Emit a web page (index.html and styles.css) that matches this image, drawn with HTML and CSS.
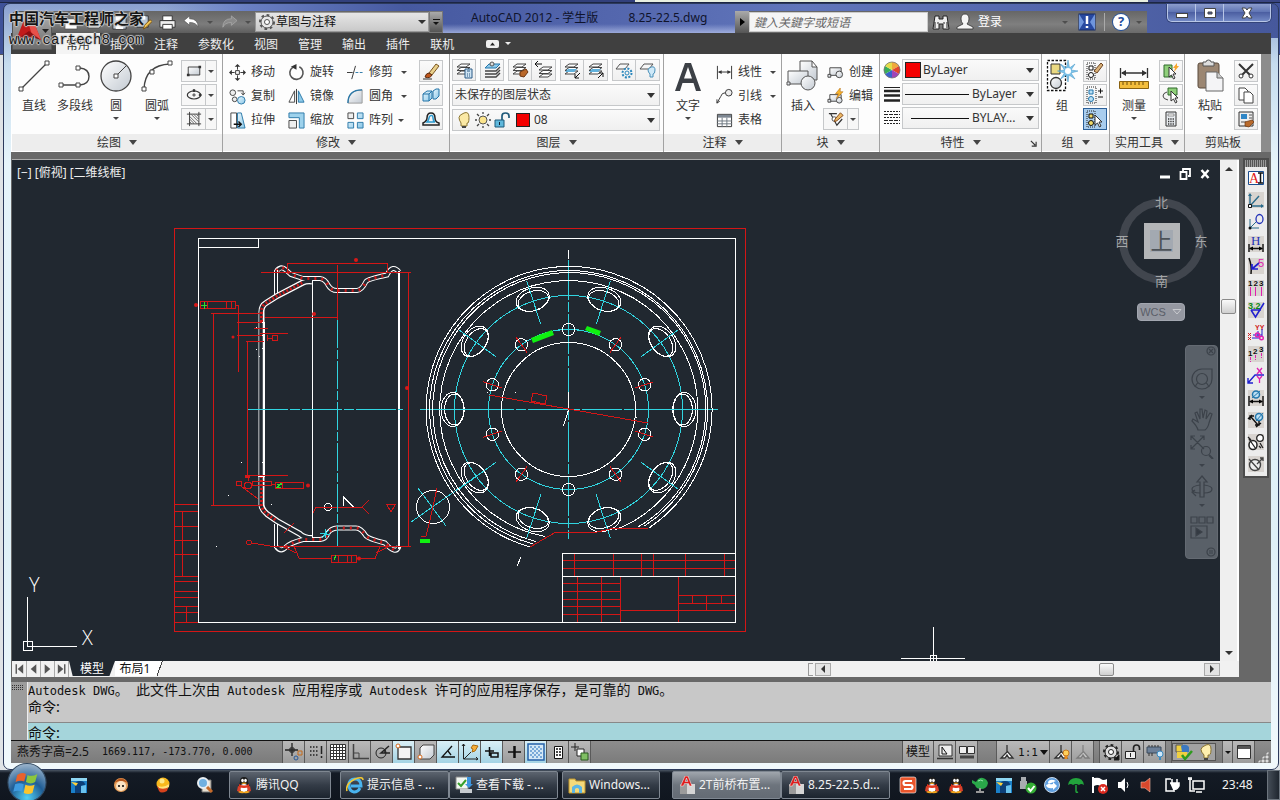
FILE: index.html
```html
<!DOCTYPE html>
<html lang="zh-CN">
<head>
<meta charset="utf-8">
<title>AutoCAD 2012 - 8.25-22.5.dwg</title>
<link rel="stylesheet" href="styles.css">
</head>
<body>
<svg class="defs" aria-hidden="true">
  <defs>
    <linearGradient id="gGrey" x1="0" y1="0" x2="1" y2="1"><stop offset="0" stop-color="#fff"/><stop offset="1" stop-color="#c3cad2"/></linearGradient>
    <linearGradient id="gBlue" x1="0" y1="0" x2="1" y2="1"><stop offset="0" stop-color="#e8f6fd"/><stop offset="1" stop-color="#8cc8e8"/></linearGradient>
    <radialGradient id="gOrb" cx=".5" cy=".9" r=".9"><stop offset="0" stop-color="#4fd0f5"/><stop offset=".5" stop-color="#1f5d95"/><stop offset="1" stop-color="#9fb6cc"/></radialGradient>
    <symbol id="layers" viewBox="0 0 18 18"><path d="M6 3h9l-4 3H2zM6 6.500h9l-4 3H2zM6 10h9l-4 3H2z" fill="#fff" stroke="#444"/></symbol>
    <symbol id="qq" viewBox="0 0 18 18"><path d="M3 11q2-3 2-6 0-4 4-4t4 4q0 3 2 6l-1 1-1 3H5l-1-3z" fill="#1c1c1c"/><ellipse cx="9" cy="12" rx="4" ry="4" fill="#fff"/><path d="M4 8q5 3 10 0v2.500q-5 3-10 0z" fill="#e2351d"/><path d="M3 10l3 1-1 5-3-1zM15 10l-3 1 1 5 3-1z" fill="#d8402a"/><ellipse cx="7.500" cy="4.500" rx="1.300" ry="1.800" fill="#fff"/><ellipse cx="10.500" cy="4.500" rx="1.300" ry="1.800" fill="#fff"/><path d="M6 7q3-1 6 0-3 2-6 0zM3 16q3-2 6 0 3-2 6 0-3 2-6 1-3 1-6-1z" fill="#f4a51c"/></symbol>
    <symbol id="bird" viewBox="0 0 18 18"><rect x="1" y="2" width="16" height="15" fill="#1a7fc8"/><path d="M1 2h16v3H1z" fill="#8ed6f2"/><path d="M5 17V9q0-4 5-4t5 4l-4 1v7z" fill="#0d3f78"/><path d="M1 6l7 1-2 3z" fill="#ffd33c"/><path d="M11 10l5-1v8h-5z" fill="#69c2ee"/></symbol>
    <symbol id="acad" viewBox="0 0 18 18"><rect x="2" y="8" width="15" height="10" fill="#9b9b9b"/><rect x="9" y="8" width="8" height="10" fill="#d5d5d5"/><path d="M2.500 10L7 0h3l4 10h-2.500l-1-2.500h-4L5.500 10zM7.200 5.500h2.600L8.500 2z" fill="#e01c1c" stroke="#fff" stroke-width=".5"/></symbol>
    <symbol id="man" viewBox="0 0 18 18"><path d="M9 2v7M9 9l-6 6h4l2-3 2 3h4L9 8z" fill="#fff" stroke="#333" stroke-width="1.300"/></symbol>
  </defs>
</svg>

<div class="desktop-strip"></div>

<main class="window">
  <header class="titlebar">
    <div class="qat">
      <button aria-label="新建"><svg class="i" viewBox="0 0 18 18"><path d="M2 5h9l4 3v8H2z" fill="#fff" stroke="#555"/></svg></button>
      <button aria-label="打开"><svg class="i" viewBox="0 0 18 18"><path d="M1 15V5h6l1 2h6v2h3l-4 6z" fill="#ddd" stroke="#444"/></svg></button>
      <button aria-label="保存"><svg class="i" viewBox="0 0 18 18"><path d="M2 2h14v14H2z" fill="#b9c6d4" stroke="#333"/><path d="M5 2h8v5H5zM5 10h8v6H5z" fill="#fff"/></svg></button>
      <button aria-label="另存为"><svg class="i" viewBox="0 0 18 18"><path d="M2 2h12v12H2z" fill="#b9c6d4" stroke="#333"/><path d="M5 2h6v4H5z" fill="#fff"/><path d="M9 16l1-4 6-6 2 2-6 6z" fill="#f1c453" stroke="#7a5210"/></svg></button>
      <button aria-label="打印"><svg class="i" viewBox="0 0 18 18"><path d="M4 2h10v5H4z" fill="#fff" stroke="#333"/><path d="M1 7h16v7H1z" fill="#eee" stroke="#333"/><path d="M4 11h10v5H4z" fill="#fff" stroke="#333"/></svg></button>
      <button aria-label="放弃"><svg class="i" viewBox="0 0 18 18"><path d="M1 7l6-5v3q9 0 9 9-2-5-9-5v3z" fill="#fff" stroke="#555" stroke-width=".7"/></svg></button>
      <span class="caret dim"></span>
      <button aria-label="重做"><svg class="i" viewBox="0 0 18 18"><path d="M17 7l-6-5v3q-9 0-9 9 2-5 9-5v3z" fill="#8b8b8b" stroke="#aaa" stroke-width=".8"/></svg></button>
      <span class="caret dim"></span>
      <div class="workspace-pick">
        <svg class="i" viewBox="0 0 18 18" fill="none" stroke="#555"><circle cx="9" cy="9" r="7" stroke-width="2" stroke-dasharray="2.700 2.700"/><circle cx="9" cy="9" r="6" fill="#e8e8e8"/><circle cx="9" cy="9" r="2.500" fill="#fff"/></svg>
        <select aria-label="工作空间"><option>草图与注释</option></select>
      </div>
      <button class="qat-more" aria-label="自定义快速访问工具栏"><span class="bar"></span><span class="caret"></span></button>
    </div>
    <h1 class="caption"><span>AutoCAD 2012 - 学生版</span><span>8.25-22.5.dwg</span></h1>
    <div class="infocenter">
      <button class="expand" aria-label="展开"><span></span></button>
      <input type="text" placeholder="鍵入关鍵字或短语" aria-label="搜索">
      <button class="bino" aria-label="查找"><svg class="i" viewBox="0 0 18 18"><path d="M3 3h4v3h4V3h4l2 13h-6v-5H7v5H1z" fill="#eee" stroke="#222"/><path d="M3 9v6M6 9v2M15 9v6M12 9v2" stroke="#222"/></svg></button>
      <button class="signin"><svg class="i" viewBox="0 0 18 18"><path d="M9 1q4 0 4 5 0 3-2 5l6 3v2H1v-2l6-3Q5 9 5 6q0-5 4-5z" fill="#f5f5f5" stroke="#333" stroke-width=".8"/></svg>登录</button>
      <span class="caret dim"></span>
      <button aria-label="Exchange"><svg class="i" viewBox="0 0 18 18"><rect x="1" y="1" width="16" height="16" fill="#2849a0" stroke="#152a66"/><path d="M1 1l5 8-5 8zM17 1l-5 8 5 8z" fill="#6f95dc"/><path d="M9 3v8M9 13v2" stroke="#fff" stroke-width="2.500"/></svg></button>
      <span class="sep"></span>
      <button class="help" aria-label="帮助"><b>?</b></button>
      <span class="caret dim"></span>
    </div>
    <div class="winbtns">
      <button aria-label="最小化"><svg viewBox="0 0 14 12"><rect x="1.500" y="6.500" width="11" height="4" fill="#fff" stroke="#444"/></svg></button>
      <button aria-label="最大化"><svg viewBox="0 0 14 12"><path d="M1.500 1.500h11v9h-11zM5 5v2h4V5z" fill="#fff" fill-rule="evenodd" stroke="#444"/></svg></button>
      <button aria-label="关闭"><svg viewBox="0 0 14 12"><path d="M2 1h3.500L7 3l1.500-2H12L9 6l3 5H8.500L7 9l-1.500 2H2l3-5z" fill="#fff" stroke="#444"/></svg></button>
    </div>
  </header>

  <nav class="menubar">
    <a href="#home" class="on">常用</a><a href="#insert">插入</a><a href="#annotate">注释</a><a href="#param">参数化</a><a href="#view">视图</a><a href="#manage">管理</a><a href="#output">输出</a><a href="#plugins">插件</a><a href="#online">联机</a>
    <button class="minribbon" aria-label="最小化功能区"><svg width="13" height="8" viewBox="0 0 13 8"><rect width="13" height="8" rx="2" fill="#eee"/><path d="M4 5.500h5L6.500 2.500z" fill="#222"/></svg><span class="caret"></span></button>
  </nav>
  <button class="appbtn" aria-label="应用程序菜单"><svg viewBox="0 0 38 38"><path d="M3 28L13 3h5l10 25-10-7z" fill="#c21b1b"/><path d="M13 3h5l10 25-9-5z" fill="#e8504a"/><path d="M3 28l13-9 12 9-6-2H9z" fill="#8d0f12"/><path d="M29 17h7l-3.500 4z" fill="#222"/></svg></button>
  <div class="watermark"><span class="wm-cn">中国汽车工程师之家</span><span class="wm-url">www.cartech8.com</span></div>

  <section class="ribbon">
    <div class="panel p-draw">
      <div class="body">
        <button class="big"><svg viewBox="0 0 34 34" fill="#fff" stroke="#444"><path d="M5 29L29 5" stroke-width="1.300"/><path d="M2 28h4v4H2zM28 2h4v4h-4z"/></svg>直线</button>
        <button class="big w42"><svg viewBox="0 0 34 34" fill="none" stroke="#444"><path d="M5 26h17q9-1 9-8.500T22 9" stroke-width="1.400"/><path d="M1 24h4v4H1zM18 24h4v4h-4zM18 7h4v4h-4z" fill="#fff"/></svg>多段线</button>
        <button class="big"><svg viewBox="0 0 34 34" stroke="#444"><circle cx="17" cy="17" r="15" fill="url(#gGrey)" stroke-width="1.300"/><path d="M17 17l10-10"/><path d="M15 15h4v4h-4z" fill="#fff"/></svg>圆<span class="caret"></span></button>
        <button class="big w42"><svg viewBox="0 0 34 34" fill="none" stroke="#444"><path d="M4 30Q5 6 30 5" stroke-width="1.400"/><path d="M2 28h4v4H2zM10 11h4v4h-4zM28 2h4v4h-4z" fill="#fff"/></svg>圆弧<span class="caret"></span></button>
        <div class="stack">
          <button class="split"><svg class="i" viewBox="0 0 18 18"><path d="M2.500 4.500h13v9h-13z" fill="url(#gGrey)" stroke="#333"/><path d="M1 12h3v3H1zM14 3h3v3h-3z" fill="#333"/></svg><span class="caret"></span></button>
          <button class="split"><svg class="i" viewBox="0 0 18 18" fill="none" stroke="#333"><ellipse cx="9" cy="9" rx="7.500" ry="4.500" stroke-width="1.400"/><path d="M9 7v4M7 9h4"/><path d="M8 3h2v2H8zM15 8h2v2h-2z" fill="#333"/></svg><span class="caret"></span></button>
          <button class="split"><svg class="i" viewBox="0 0 18 18" fill="none" stroke="#333"><path d="M4 1v16M14.500 1v16M1 3.500h16M1 14.500h16"/><path d="M4 6l8 8M4 9l5 5M6 4l8 8M9 4l5 5M4 12l2 2M12 4l2 2" stroke-width=".8"/></svg><span class="caret"></span></button>
        </div>
      </div>
      <button class="ptitle">绘图<span class="caret lg"></span></button>
    </div>

    <div class="panel p-mod">
      <div class="body">
        <div class="rows">
          <button><svg class="i" viewBox="0 0 18 18"><path d="M7 7h4v4H7z" fill="none" stroke="#333"/><path d="M9 0l3 3H6zM9 18l3-3H6zM0 9l3-3v6zM18 9l-3-3v6z" fill="#333"/><path d="M9 2v4M9 12v4M2 9h4M12 9h4" stroke="#333"/></svg>移动</button>
          <button><svg class="i" viewBox="0 0 18 18" stroke="#444"><circle cx="4" cy="5" r="3" fill="#eee"/><circle cx="6" cy="12" r="2.500" fill="#eee"/><circle cx="13" cy="13" r="4" fill="url(#gBlue)" stroke="#2a78a8"/><path d="M9 3h6v4M13 5l2 2.500L17 5" fill="none"/></svg>复制</button>
          <button><svg class="i" viewBox="0 0 18 18"><path d="M2 1h6v16H2z" fill="#fff" stroke="#444"/><path d="M9 1h4l4 16H9z" fill="url(#gBlue)" stroke="#2a78a8"/><path d="M5 13h7M10 10l3 3-3 3" fill="none" stroke="#111" stroke-width="1.500"/></svg>拉伸</button>
        </div>
        <div class="rows">
          <button><svg class="i" viewBox="0 0 18 18"><path d="M5 3.500A7 7 0 1 0 12 3" fill="none" stroke="#555" stroke-width="1.700"/><path d="M9 0v6L3 3z" fill="#333"/></svg>旋转</button>
          <button><svg class="i" viewBox="0 0 18 18"><path d="M7 3v12H1z" fill="#fff" stroke="#444"/><path d="M11 3v12h6z" fill="#8fcbe9" stroke="#2a78a8"/><path d="M9 1v16" stroke="#333"/></svg>镜像</button>
          <button><svg class="i" viewBox="0 0 18 18"><path d="M1 1h16v16h-5V6H1z" fill="#9ed2ec" stroke="#2a78a8"/><path d="M1 9h8v8H1z" fill="#eee" stroke="#444"/></svg>缩放</button>
        </div>
        <div class="rows">
          <button><svg class="i" viewBox="0 0 18 18" stroke="#333"><path d="M0 9h6M9 2L5 16" /><path d="M9 9h9" stroke="#2a78a8" stroke-dasharray="3 1.500"/></svg>修剪<span class="caret far"></span></button>
          <button><svg class="i" viewBox="0 0 18 18"><path d="M1 16Q1 2 16 2v14z" fill="url(#gGrey)" stroke="#999"/><path d="M1 16Q1 2 16 2" fill="none" stroke="#2a78a8" stroke-width="1.500"/></svg>圆角<span class="caret far"></span></button>
          <button><svg class="i" viewBox="0 0 18 18" fill="url(#gBlue)" stroke="#2a78a8"><path d="M1 1h6v6H1z" fill="#eee" stroke="#444"/><path d="M11 1h6v6h-6zM1 11h6v6H1zM11 11h6v6h-6z"/></svg>阵列<span class="caret near"></span></button>
        </div>
        <div class="stack">
          <button class="sq"><svg class="i" viewBox="0 0 18 18"><path d="M7 11L14 2l3 2-7 9z" fill="#e8cf8a" stroke="#7a5520"/><path d="M3 15q1-4 4-4l3 2q-2 4-7 2z" fill="#c0561a" stroke="#5a2a10"/><path d="M1 17h9" stroke="#333"/></svg></button>
          <button class="sq"><svg class="i" viewBox="0 0 18 18" fill="url(#gBlue)" stroke="#2475a8"><path d="M1 8l4-3h5v7l-3 3H1zM1 8h6v7M7 8l3-3"/><path d="M11 5l3-2h3v7l-3 3h-3z"/></svg></button>
          <button class="sq"><svg class="i" viewBox="0 0 18 18" fill="none"><path d="M1 15h16v-2q-4-1-4-5 0-5-4-5T5 8q0 3-4 5z" stroke="#222" stroke-width="1.500"/><path d="M5 12h8q-2-1-2-4t-2-2.500T7 8t-2 4z" stroke="#2a9ad0" stroke-width="1.500"/></svg></button>
        </div>
      </div>
      <button class="ptitle">修改<span class="caret lg"></span></button>
    </div>

    <div class="panel p-layer">
      <div class="body col">
        <div class="layerbtns">
          <span class="grp"><button><svg class="i"><use href="#layers"/><path d="M10 8h7v9h-7z" fill="#cfe4f3" stroke="#2a5a86"/><path d="M12 10h3M12 13h1M14 13h1M12 15h1M14 15h1" stroke="#2a5a86"/></svg></button></span>
          <span class="grp"><button><svg class="i" viewBox="0 0 18 18"><path d="M6 3h11l-4 4H2z" fill="#8ec9ea" stroke="#2377ad"/><path d="M2 10h11l4-4M2 13h11l4-4M2 16h11l4-4" fill="none" stroke="#444" stroke-width="1.400"/><circle cx="9" cy="3" r="2" fill="#ddd" stroke="#555"/></svg></button></span>
          <span class="grp"><button><svg class="i"><use href="#layers"/><path d="M9 11l6-3 2 3-4 5-4-1z" fill="#b9682a" stroke="#6b3510"/></svg></button><button><svg class="i"><use href="#layers" x="2" y="3"/><path d="M0 3h7M3 0L0 3l3 3" stroke="#111" fill="none"/></svg></button></span>
          <span class="grp"><button><svg class="i"><use href="#layers"/><path d="M5 8h9l-3 3H2z" fill="#62b2dd"/><path d="M17 12l-5 5M12 13v4h4" stroke="#111" fill="none"/></svg></button><button><svg class="i"><use href="#layers"/><path d="M5 8h9l-3 3H2z" fill="#62b2dd"/><path d="M11 17l5-5M12 12h4v4" stroke="#111" fill="none"/></svg></button></span>
          <span class="grp"><button><svg class="i" viewBox="0 0 18 18" fill="none"><path d="M5 3h9l-4 5H1z" stroke="#555"/><circle cx="12" cy="12" r="4.500" stroke="#2a87bd" stroke-width="2" stroke-dasharray="2 1.500"/><circle cx="12" cy="12" r="2" stroke="#2a87bd"/></svg></button><button><svg class="i" viewBox="0 0 18 18"><path d="M5 3h9l-4 5H1z" fill="none" stroke="#555"/><path d="M11 13q-2-2-2-4t3.500-3 3.500 3-2 4v3h-3z" fill="#cfe9f8" stroke="#4a90b8"/></svg></button></span>
        </div>
        <div class="pick wide"><select aria-label="图层状态"><option>未保存的图层状态</option></select></div>
        <div class="pick wide lay">
          <span class="deco"><svg class="i" viewBox="0 0 18 18"><path d="M6 12Q4 9 4 6.500T9 2t5 4.500-2 5.500v3H6z" fill="#fbe9a5" stroke="#8a7430"/><path d="M7 16h4" stroke="#444" stroke-width="2"/></svg><svg class="i" viewBox="0 0 18 18"><circle cx="9" cy="9" r="4" fill="#fbe48c" stroke="#555"/><path d="M9 1v2M9 15v2M1 9h2M15 9h2M3 3l2 2M13 13l2 2M15 3l-2 2M5 13l-2 2" stroke="#444" stroke-width="1.300"/></svg><svg class="i" viewBox="0 0 18 18"><path d="M2 9h9v7H2z" fill="#5fb8dc" stroke="#1f5a7a"/><path d="M9 9V5q0-3 3.500-3T16 5v2" fill="none" stroke="#1f5a7a" stroke-width="1.700"/><path d="M6.500 11v3" stroke="#123"/></svg><span class="swatch"></span></span>
          <select aria-label="当前图层"><option>08</option></select>
        </div>
      </div>
      <button class="ptitle">图层<span class="caret lg"></span></button>
    </div>

    <div class="panel p-anno">
      <div class="body">
        <button class="big"><svg viewBox="0 0 34 34"><path d="M4 32L14 4h6l10 28h-5l-2.500-8h-11L9 32zM13 19.500h8L17 8z" fill="#3c4046"/></svg>文字<span class="caret"></span></button>
        <div class="rows">
          <button><svg class="i" viewBox="0 0 18 18" stroke="#333"><path d="M1.500 2v14M16.500 2v14M3 8.500h12"/><path d="M2 8.500l4-2v4zM16 8.500l-4-2v4z" fill="#333" stroke="none"/></svg>线性<span class="caret far"></span></button>
          <button><svg class="i" viewBox="0 0 18 18" fill="none" stroke="#333"><circle cx="13.500" cy="5" r="3.500" fill="#eee"/><path d="M10 5q-4 0-5 4l-4 7M1 12v4l3-2"/></svg>引线<span class="caret far"></span></button>
          <button><svg class="i" viewBox="0 0 18 18"><path d="M1.500 2.500h15v13h-15z" fill="#fff" stroke="#333"/><path d="M2 3h14v3H2z" fill="#7d8792"/><path d="M1 9.500h16M1 12.500h16M6.500 6v10M11.500 6v10" stroke="#6b7680"/></svg>表格</button>
        </div>
      </div>
      <button class="ptitle">注释<span class="caret lg"></span></button>
    </div>

    <div class="panel p-block">
      <div class="body">
        <button class="big"><svg viewBox="0 0 34 34" fill="url(#gGrey)" stroke="#555"><path d="M14 2h12l5 6v13H14zM26 2v6h5"/><path d="M2 12h20v13H2z"/><circle cx="22" cy="24" r="7"/><path d="M1 23h3v3H1z"/></svg>插入</button>
        <div class="rows">
          <button><svg class="i" viewBox="0 0 18 18" fill="url(#gGrey)" stroke="#444"><path d="M3 4h12v8H3z"/><circle cx="13" cy="11" r="3.500"/><path d="M1 11h3v3H1z"/></svg>创建</button>
          <button><svg class="i" viewBox="0 0 18 18" fill="url(#gGrey)" stroke="#444"><path d="M3 7h12v7H3z"/><circle cx="13" cy="13" r="3"/><path d="M1 12h3v3H1z"/><path d="M14 0l-5 6h3l-2 5 7-7h-3z" fill="#f8b52c" stroke="#b36a10" stroke-width=".6"/></svg>编辑</button>
          <button class="split"><svg class="i" viewBox="0 0 18 18"><path d="M1 3h9M3 3l7 13 6-7" fill="none" stroke="#333" stroke-width="1.300"/><circle cx="7" cy="9" r="2.500" fill="#fff" stroke="#444"/><path d="M8 9l6-7 3 3-7 6-3 1z" fill="#eab765" stroke="#7a3f10"/></svg><span class="caret"></span></button>
        </div>
      </div>
      <button class="ptitle">块<span class="caret lg"></span></button>
    </div>

    <div class="panel p-prop">
      <div class="body col">
        <div class="prow"><svg class="i" viewBox="0 0 18 18"><path d="M9 9V1a8 8 0 0 1 7 4z" fill="#f0a83c"/><path d="M9 9l7-4a8 8 0 0 1 0 8z" fill="#e2462e"/><path d="M9 9l7 4a8 8 0 0 1-7 4z" fill="#a045b8"/><path d="M9 9v8a8 8 0 0 1-7-4z" fill="#3b62cc"/><path d="M9 9l-7 4a8 8 0 0 1 0-8z" fill="#39ad5a"/><path d="M9 9L2 5a8 8 0 0 1 7-4z" fill="#e4dc4a"/><circle cx="9" cy="9" r="8" fill="none" stroke="#777" stroke-width=".8"/></svg>
          <div class="pick clr"><span class="deco"><span class="swatch big-sw"></span></span><select aria-label="颜色"><option>ByLayer</option></select></div></div>
        <div class="prow"><svg class="i" viewBox="0 0 18 18"><path d="M1 2.500h16" stroke="#222"/><path d="M1 6h16M1 10.500h16M1 15.500h16" stroke="#222" stroke-width="2.500"/></svg>
          <div class="pick ln"><span class="deco"><span class="rule"></span></span><select aria-label="线宽"><option>ByLayer</option></select></div></div>
        <div class="prow"><svg class="i" viewBox="0 0 18 18" stroke="#222"><path d="M1 2.500h16M1 8.500h16M1 14.500h16" stroke-dasharray="2 1"/><path d="M1 5.500h16M1 11.500h16" stroke-dasharray="4 1"/></svg>
          <div class="pick ln"><span class="deco"><span class="rule short"></span></span><select aria-label="线型"><option>BYLAY...</option></select></div></div>
      </div>
      <button class="ptitle">特性<span class="caret lg"></span><svg class="launch" viewBox="0 0 8 8"><path d="M1 1l5 5M7 2v5H2" fill="none" stroke="#333" stroke-width="1.300"/></svg></button>
    </div>

    <div class="panel p-group">
      <div class="body">
        <button class="big"><svg viewBox="0 0 34 34"><path d="M2.500 1.500h18v30h-18z" fill="#fff" stroke="#111" stroke-width="1.300" stroke-dasharray="2.500 1.500"/><path d="M6 5h9v10H6z" fill="#ead982" stroke="#333"/><circle cx="11" cy="24" r="5.500" fill="url(#gGrey)" stroke="#333" stroke-width="1.300"/><path d="M23 1l1.500 8L30 5l-4 6 7 1-7 2 4 6-6-4-1 7-1.500-7-6 4 4-6-7-2 7-1-4-6 6 4z" fill="#7fc4ea" stroke="#3f93c4" stroke-width=".5"/><circle cx="23" cy="12" r="3" fill="#fff"/></svg>组</button>
        <div class="stack">
          <button class="sq"><svg class="i" viewBox="0 0 18 18"><path d="M1 1h8v16H1z" fill="none" stroke="#222" stroke-dasharray="1 1"/><path d="M3 4h4v4H3z" fill="#fff" stroke="#111"/><circle cx="5" cy="13" r="2.500" fill="#fff" stroke="#111"/><path d="M8 9l7-8 2 2-6 8z" fill="#d8b078" stroke="#6b4420"/></svg></button>
          <button class="sq"><svg class="i" viewBox="0 0 18 18"><path d="M1 1h9v16H1z" fill="none" stroke="#222" stroke-dasharray="1 1"/><path d="M3 4h4v4H3z" fill="#b9e0f5" stroke="#2377ad"/><circle cx="5" cy="13" r="2.500" fill="#b9e0f5" stroke="#2377ad"/><path d="M12 5h5M14.500 2.500v5M12 11h5" stroke="#111"/></svg></button>
          <button class="sq on"><svg class="i" viewBox="0 0 18 18"><path d="M1 1h8v16H1z" fill="none" stroke="#222" stroke-dasharray="1 1"/><path d="M3 4h4v4H3z" fill="#f0d968" stroke="#111"/><circle cx="5" cy="13" r="2.500" fill="#f0d968" stroke="#111"/><path d="M9 5v10l2.500-2 2 4 1.500-1-2-4h3z" fill="#fff" stroke="#333"/></svg></button>
        </div>
      </div>
      <button class="ptitle">组<span class="caret lg"></span></button>
    </div>

    <div class="panel p-util">
      <div class="body">
        <button class="big"><svg viewBox="0 0 34 34"><path d="M3.500 9v10M30.500 9v10M5 14h24" stroke="#333" stroke-width="1.300"/><path d="M4 14l5-3v6zM30 14l-5-3v6z" fill="#333"/><path d="M2.500 22.500h29v7h-29z" fill="#f3bd3c" stroke="#8a6210"/><path d="M6 23v3M10 23v3M14 23v3M18 23v3M22 23v3M26 23v3" stroke="#6b4a08"/></svg>测量<span class="caret"></span></button>
        <div class="stack">
          <button class="sq"><svg class="i" viewBox="0 0 18 18"><path d="M2 3h8v12H2z" fill="#8fcf7a" stroke="#2e6b2a"/><path d="M7 5v10l2.500-2 2 4 1.500-1-2-4h3z" fill="#fff" stroke="#333"/><path d="M15 1l-4 5h2l-1 4 5-6h-2z" fill="#f8a62c"/></svg></button>
          <button class="sq"><svg class="i" viewBox="0 0 18 18"><path d="M6 2h9v7H6z" fill="#8fcf7a" stroke="#2e6b2a"/><path d="M5 6q-4 1-4 4t5 4" fill="none" stroke="#444"/><path d="M9 5v10l2.500-2 2 4 1.500-1-2-4h3z" fill="#fff" stroke="#333"/></svg></button>
          <button class="sq"><svg class="i" viewBox="0 0 18 18"><path d="M4 2h10v14H4z" fill="#e8ecf0" stroke="#333"/><path d="M6 4h6v2H6z" fill="#fff" stroke="#555" stroke-width=".6"/><path d="M6 9h6M6 11.500h6M6 14h6" stroke="#333" stroke-width="1.300" stroke-dasharray="1.300 1"/></svg></button>
        </div>
      </div>
      <button class="ptitle">实用工具<span class="caret lg"></span></button>
    </div>

    <div class="panel p-clip">
      <div class="body">
        <button class="big"><svg viewBox="0 0 34 34"><rect x="5" y="4" width="21" height="25" rx="2" fill="#9b8672" stroke="#5a4a3c"/><path d="M10 3h3q0-2 2.500-2T18 3h3v4H10z" fill="#ddd" stroke="#555"/><path d="M13 13h11l6 6v13H13z" fill="#f4f4f6" stroke="#666"/><path d="M24 13v6h6" fill="#ccc" stroke="#666"/></svg>粘贴<span class="caret"></span></button>
        <div class="stack">
          <button class="sq"><svg class="i" viewBox="0 0 18 18" fill="#fff" stroke="#333"><path d="M2 2l11 11M16 2L5 13" stroke-width="2"/><circle cx="4" cy="14" r="2"/><circle cx="14" cy="14" r="2"/></svg></button>
          <button class="sq"><svg class="i" viewBox="0 0 18 18" fill="#fff" stroke="#444"><path d="M2 2h6l3 3v9H2z"/><path d="M7 6h6l3 3v8H7z"/></svg></button>
          <button class="sq"><svg class="i" viewBox="0 0 18 18"><path d="M2 2h14v14H2z" fill="#eee" stroke="#333"/><path d="M4 4h6v5H4z" fill="#2f86c6"/><path d="M12 5h3M12 8h3M4 12h5" stroke="#555"/><path d="M8 12l7-2 2 2-5 5-4-1z" fill="#b86a2c" stroke="#6b3510" stroke-width=".7"/></svg></button>
        </div>
      </div>
      <div class="ptitle">剪贴板</div>
    </div>
  </section>

  <section class="workspace">
    <div class="doc">
      <div class="docmain">
        <div class="canvas">
          <svg class="drawing" viewBox="12 160 1208 501" preserveAspectRatio="xMinYMin meet">
            <defs>
              <g id="vent" fill="none"><ellipse cx="568.500" cy="293.700" rx="17" ry="11.500" stroke="#fff"/><ellipse cx="568.500" cy="295.300" rx="15.500" ry="9.700" stroke="#fff"/><path d="M568.500 274v46" stroke="#31d5e0"/></g>
              <circle id="bolt" cx="568.500" cy="329.500" r="6.200" fill="none" stroke="#fff"/>
              <g id="rbolt"><circle cx="568.500" cy="329.500" r="6.200" fill="none" stroke="#fff"/><path d="M568.500 320v19" stroke="#e01818"/></g>
            </defs>
            <g class="ln red">
              <path d="M174.500 228.500h571v403h-571z"/>
              <path d="M174 504.500h24M174 511.500h24M174 526.500h24M174 540.500h24M174 554.500h24M174 576.500h24M174 581.500h24M174 591.500h24M174 597.500h24M174 606.500h24M174 612.500h24M174 622.500h24M182.500 511v65M186.500 606v16"/>
              <path d="M562 560.500h173M562 568.500h173M574.500 553v23M613.500 553v23M641.500 553v23M653.500 553v23M685.500 553v23M724.500 553v23M562 583.500h58M562 591.500h58M562 599.500h58M562 606.500h58M562 614.500h58M577.500 576v46M601.500 576v46M620.500 576v46M678.500 576v46M620 610.500h115M678 595.500h57M678 603.500h57M692.500 595v8M706.500 595v15M721.500 595v8"/>
            </g>
            <g class="ln white"><path d="M198.500 238.500h537v384h-537zM198 247.500h60.500v-9M562.500 622v-68.500h173M562 576.500h173"/></g>

            <g fill="none" stroke="#fff">
              <path d="M261.500 476V313Q261 306 266 303L277 296L303 282.500Q306 281 312 281.500M261.500 476v29Q262 510 267 514L277 521L300 534Q304 538 312 538" stroke-width="6"/>
              <path d="M276.500 271Q281 265 286 270L291 274.500L303 278.500H320Q325 279 328 285Q331 290.500 337 290.500H357Q362 290 366 281.500Q368 279 387 275Q390 269 393 268.500T399 272" stroke-width="5"/>
              <path d="M276.500 547Q281 553 286 547Q290 543 303 539.500H320Q326 539 328 533Q331 528.500 337 528H356Q361 528 366 536Q369 539 385 543Q390 549 394 550T399 546" stroke-width="5"/>
            </g>
            <g fill="none" stroke="#212830">
              <path d="M261 476V313Q261 306 266 303L277 296L303 282.500Q306 281 312 281.500M261 476v29Q262 510 267 514L277 521L300 534Q304 538 312 538" stroke-width="3.500"/>
              <path d="M276.500 272Q281 265 286 270L291 274.500L303 278.500H320Q325 279 328 285Q331 290.500 337 290.500H357Q362 290 366 281.500Q368 279 387 275Q390 269 393 268.500T400 273M276.500 546Q281 553 286 547Q290 543 303 539.500H320Q326 539 328 533Q331 528.500 337 528H356Q361 528 366 536Q369 539 385 543Q390 549 394 550T399 545" stroke-width="3"/>
            </g>
            <g fill="none" stroke="#c81818" stroke-width="3" stroke-dasharray="2 5">
              <path d="M276.500 271Q281 265 286 270L291 274.500L303 278.500H320Q325 279 328 285Q331 290.500 337 290.500H357Q362 290 366 281.500Q368 279 387 275M286 547Q290 543 303 539.500H320Q326 539 328 533Q331 528.500 337 528H356Q361 528 366 536Q369 539 385 543L394 550"/>
              <path d="M261.500 322V313Q261 306 266 303L277 296L303 282.500M261.500 476v29Q262 510 267 514L277 521" stroke-dasharray="2 2"/>
            </g>
            <g class="ln white">
              <path d="M274.500 270v25M277.500 270v23M274.500 524v24M277.500 524v22M312.500 281v256M258 322.500h7M258 335.500h7M258 341.500h7M258 476.500h7"/>
              <path d="M399 271v278M264 322v154" stroke-width="2"/>
              <path d="M343.500 506v-9l10 10"/><circle cx="328" cy="507" r="3.500"/>
              <path d="M238 349h1M256 327h1M256 349h1M259 356h1M262 348h2M241 462h1M228 495h1M216 546h1M262 462h1M515 392h1M271 504h1M487 392h1M636 417h1"/>
            </g>
            <g class="ln red">
              <path d="M287 263.500h101M287.500 263v9M387.500 263v9M261 272.500h150M337.500 265v55M408.500 273v274M265 317.500h72M275 546.500h136"/>
              <path d="M200.500 301.500h35v7h-35zM207.500 301v7M226.500 301v7M231.500 301v7M236 305.500h2.500v66M211 313.500h51M213.500 313v192M211 505.500h51M237 322.500h25M237 335.500h25M254 328.500h14M260 333.500h28M267 335v6M267 338.500h5M247.500 341v135M246 341.500h18M245 475.500h43"/><circle cx="275" cy="338" r="3"/>
              <path d="M236.500 481.500h5v4h-5zM252.500 481.500h19v4h-19zM271 484.500h4M275.500 482.500h28v6h-28zM282.500 482v6M241 486l17 13M248 476v5M315 507.500h47M316 507l-3 6M362 507l7-7M362 507l7 7M386.500 504.500h9l-4.500 7zM252 543l18 3h12l14 7M284 533l10-10M294 546l5 12h32M331.500 555.500h25v7h-25zM338.500 555v7M347.500 555v7M351.500 555v7M357 558.500h18l5-12M376 553l12-6"/><circle cx="248" cy="485.500" r="3.500"/><circle cx="249" cy="542.500" r="2.500"/>
            </g>
            <g fill="#d81818"><circle cx="356" cy="260" r="2"/><circle cx="407" cy="388" r="2"/><circle cx="314" cy="314" r="2"/><circle cx="196" cy="305" r="2"/><circle cx="233" cy="337" r="1.500"/><circle cx="308" cy="485.500" r="2"/><circle cx="359" cy="558.500" r="2"/><path d="M245 475h5v3h-5z"/></g>
            <g class="ln" stroke="#2be22b"><path d="M201 305.500h6M204.500 302v7M276.500 488l5-5M277 484h5M276 487h5M334 560l2-5"/></g>
            <g class="ln cyan">
              <path d="M337.500 320v226" stroke-dasharray="28 2 9 2"/><path d="M248 409.500h155" stroke-dasharray="40 2 10 2"/><path d="M320 533l10 2M322 538l7-8M325 529v9"/>
            </g>

            <g class="ln cyan">
              <circle cx="568.500" cy="409.500" r="80"/><circle cx="568.500" cy="409.500" r="114"/>
              <path d="M568.500 260v279M420 409.500h298" stroke-dasharray="40 2 10 2"/>
              <path d="M558 329.500h21M418 488l28 38M411 522l84-59"/>
            </g>
            <g class="ln white">
              <path d="M530 547A143 143 0 1 1 649 528M534 544.200A139 139 0 1 1 644.500 526M536 541.500A136.500 136.500 0 1 1 638 527M545 536.400A129 129 0 1 1 615 530"/>
              <circle cx="568.500" cy="409.500" r="67"/><circle cx="433" cy="507" r="16.500"/>
              <path d="M568.500 250v9M568.500 392v18l-5 16M521 557l-4 9"/>
            </g>
            <g class="ln">
              <use href="#vent" transform="rotate(18 568.500 409.500)"/><use href="#vent" transform="rotate(54 568.500 409.500)"/><use href="#vent" transform="rotate(90 568.500 409.500)"/><use href="#vent" transform="rotate(126 568.500 409.500)"/><use href="#vent" transform="rotate(162 568.500 409.500)"/><use href="#vent" transform="rotate(198 568.500 409.500)"/><use href="#vent" transform="rotate(234 568.500 409.500)"/><use href="#vent" transform="rotate(270 568.500 409.500)"/><use href="#vent" transform="rotate(306 568.500 409.500)"/><use href="#vent" transform="rotate(342 568.500 409.500)"/>
              <use href="#bolt"/><use href="#bolt" transform="rotate(180 568.500 409.500)"/>
              <use href="#rbolt" transform="rotate(36 568.500 409.500)"/><use href="#rbolt" transform="rotate(72 568.500 409.500)"/><use href="#rbolt" transform="rotate(108 568.500 409.500)"/><use href="#rbolt" transform="rotate(144 568.500 409.500)"/><use href="#rbolt" transform="rotate(216 568.500 409.500)"/><use href="#rbolt" transform="rotate(252 568.500 409.500)"/><use href="#rbolt" transform="rotate(288 568.500 409.500)"/><use href="#rbolt" transform="rotate(324 568.500 409.500)"/>
            </g>
            <g class="ln red"><path d="M489 395l159 28M533 393l14 3-2 8-14-3zM437 488l-7 32-4 16h-5M530 547l26-15h20l17 1 17-4 39-1"/></g>
            <path d="M531 338l21-8 2 5-21 8zM587 326l14 5-2 5-14-6zM420 539h10v4h-10z" fill="#10f010"/>

            <g class="ln white"><path d="M27.500 597v49.500H77M23.500 641.500h9v9h-9zM901 658.500h64M933.500 627v34M930.500 655.500h6v6h-6z"/></g>
            <text x="29" y="592" class="axis">Y</text><text x="82" y="645" class="axis">X</text>
          </svg>
          <div class="viewlabel"><button>[−]</button><button>[俯视]</button><button>[二维线框]</button></div>
          <div class="mdi">
            <button aria-label="最小化"><svg viewBox="0 0 12 12"><path d="M1 9h10" stroke="#fff" stroke-width="3"/></svg></button>
            <button aria-label="还原"><svg viewBox="0 0 12 12"><path d="M4 3V1h7v7H9M1.500 4h6v7h-6z" fill="none" stroke="#fff" stroke-width="1.800"/></svg></button>
            <button aria-label="关闭"><svg viewBox="0 0 12 12"><path d="M2.500 2l7 8M9.500 2l-7 8" stroke="#fff" stroke-width="2.500"/></svg></button>
          </div>
          <svg class="cube" viewBox="0 0 96 100">
            <circle cx="48.500" cy="49" r="38.500" fill="none" stroke="#41464e" stroke-width="8"/>
            <rect x="31" y="31" width="36" height="36" fill="#b4b6b8"/><rect x="37" y="38" width="23" height="22" fill="#a3a9b1"/>
            <text x="48.500" y="57" class="face">上</text>
            <text x="48.500" y="15">北</text><text x="48.500" y="94">南</text><text x="9" y="54">西</text><text x="88" y="54">东</text>
          </svg>
          <button class="wcs">WCS<svg width="10" height="6" viewBox="0 0 10 6"><path d="M1 .5h8L5 5z" fill="none" stroke="#c8cace"/></svg></button>
          <div class="navbar">
            <button class="x" aria-label="关闭"><svg viewBox="0 0 10 10"><circle cx="5" cy="5" r="4"/><path d="M3 3l4 4M7 3l-4 4"/></svg></button>
            <button aria-label="导航控制盘"><svg viewBox="0 0 24 24"><path d="M12 2h10v10a10 10 0 1 1-10-10z"/><circle cx="12" cy="12" r="5.500"/><path d="M5 20q2-4 3-4M19 20q-2-4-3-4"/></svg></button><span class="caret"></span>
            <button aria-label="平移"><svg viewBox="0 0 24 24"><path d="M8 23q-1-4-6-9l1-2 5 3L5 6l2-1 3 7V2h2l1 9 2-8 2 1-1 8 4-6 2 1-3 9q-1 5-4 7z"/></svg></button>
            <button aria-label="缩放"><svg viewBox="0 0 24 24"><path d="M1 1l13 13M14 1L1 14M1 5V1h4M10 1h4v4M1 10v4h4"/><circle cx="16" cy="16" r="4.500"/><path d="M19 20l4 4" stroke-width="2"/></svg></button><span class="caret"></span>
            <button aria-label="动态观察"><svg viewBox="0 0 24 24"><path d="M12 1l5 6h-3v15h-4V7H7z"/><path d="M10 10q-8 1-8 4 0 4 8 4M5 15l-3 2 4 4M14 10q8 1 8 4 0 4-8 4"/></svg></button><span class="caret"></span>
            <button aria-label="ShowMotion"><svg viewBox="0 0 24 24"><path d="M1 2h6v6H1zM9 2h6v6H9zM17 2h6v6h-6zM1 11h16v12H1z"/><path d="M6 13v8l6-4z" fill="#343a42"/></svg></button>
            <button class="x" aria-label="自定义"><svg viewBox="0 0 10 10"><circle cx="5" cy="5" r="4"/><path d="M3 4h4M3 6h4"/></svg></button>
          </div>
        </div>
        <div class="vscroll"><button aria-label="向上"><span class="up"></span></button><span class="thumb"></span><button aria-label="向下"><span class="down"></span></button></div>
      </div>
      <div class="tabs">
        <div class="arrows"><button aria-label="第一个"><svg viewBox="0 0 14 14"><path d="M3.500 2v10" stroke="#555" stroke-width="1.500"/><path d="M11 2v10L5 7z"/></svg></button><button aria-label="上一个"><svg viewBox="0 0 14 14"><path d="M10 2v10L4 7z"/></svg></button><button aria-label="下一个"><svg viewBox="0 0 14 14"><path d="M4 2v10l6-5z"/></svg></button><button aria-label="最后一个"><svg viewBox="0 0 14 14"><path d="M3 2v10l6-5z"/><path d="M10.500 2v10" stroke="#555" stroke-width="1.500"/></svg></button></div>
        <button class="tab model">模型</button><button class="tab layout">布局1</button>
        <div class="hscroll"><span class="grip"></span><button aria-label="向左"><span class="left"></span></button><span class="track"></span><span class="thumb"></span><span class="track2"></span><button aria-label="向右"><span class="right"></span></button></div>
      </div>
    </div>
    <div class="sidebar">
      <span class="dots"></span>
      <button><svg viewBox="0 0 16 16"><path d="M.5 1.500h15v13H.5z" fill="#fff" stroke="#1b4d8f"/><text x="1" y="13" class="t-red">A</text><path d="M10 3h5M10 13h5M12.500 3v10" stroke="#111" stroke-width="1.500"/></svg></button>
      <button><svg viewBox="0 0 16 16" class="tint"><path d="M2 14V2M2 14h13M2 14L11 4" stroke="#2b6c8c" fill="none" stroke-width="1.400"/><path d="M0 4l2-3 2 3zM13 12l3 2-3 2z" fill="#2b6c8c"/><path d="M.5 12.500h3v3h-3z" fill="#fff" stroke="#111"/></svg></button>
      <button><svg viewBox="0 0 16 16"><path d="M2 14V5M2 14h9M2 14l6-6" stroke="#2b6c8c" fill="none"/><ellipse cx="11.500" cy="5" rx="3.500" ry="4.500" fill="none" stroke="#2433b8" stroke-width="1.300"/><circle cx="2" cy="14" r="1.500" fill="#111"/></svg></button>
      <button><svg viewBox="0 0 16 16" class="tint"><text x="3" y="9" class="t-blue">H</text><path d="M1 8v8M15 8v8M2 12.500h12" stroke="#111" stroke-width="1.400"/><path d="M1 12.500l4-2v4zM15 12.500l-4-2v4z"/></svg></button>
      <button><svg viewBox="0 0 16 16" class="tint"><path d="M1 0q3 8 2 16" stroke="#111" fill="none" stroke-width="1.500"/><path d="M11 5L4 11M4 6v5h6" stroke="#2020d0" fill="none" stroke-width="1.700"/><text x="10" y="9" class="t-mag">5</text></svg></button>
      <button><svg viewBox="0 0 16 16" class="tint"><text x="0" y="6" class="t-num">1</text><text x="5.500" y="6" class="t-num">2</text><text x="11" y="6" class="t-num">3</text><path d="M2.500 7v9M7.500 7v9M13.500 7v9" stroke="#e020b0"/></svg></button>
      <button><svg viewBox="0 0 16 16" class="tint"><text x="0" y="7" class="t-grn">3.2</text><path d="M3 8h10M3 8l4.500 7L16 1" stroke="#2020d0" fill="none" stroke-width="1.500"/></svg></button>
      <button><svg viewBox="0 0 16 16"><text x="7" y="6" class="t-r2">YY</text><path d="M4 14h8M10 7v6M5 11h9M14 5v8" stroke="#2020d0"/><path d="M0 9l3 3M3 9l-3 3M0 13l3 3M3 13l-3 3" stroke="#d02020"/><circle cx="9.500" cy="11" r="2" fill="none" stroke="#e020b0" stroke-width="1.400"/><circle cx="13.500" cy="14" r="1.800" fill="none" stroke="#e020b0" stroke-width="1.400"/></svg></button>
      <button><svg viewBox="0 0 16 16" class="tint"><text x="0" y="10" class="t-num">1</text><text x="5" y="8" class="t-num">2</text><text x="11" y="6" class="t-num">3</text><path d="M2.500 11v5M7.500 9v5M13.500 7v5" stroke="#e020b0" stroke-dasharray="3 1"/></svg></button>
      <button><svg viewBox="0 0 16 16"><path d="M0 15l7-8h9M0 10v5h5" stroke="#2020d0" fill="none" stroke-width="1.400"/><path d="M9 0l5 6M14 0L9 6M9 8l2.500 3L14 8M11.500 11v4" stroke="#e020b0" fill="none" stroke-width="1.300"/></svg></button>
      <button><svg viewBox="0 0 16 16" class="tint"><circle cx="8" cy="4.500" r="3.500" fill="#bde0f4" stroke="#2377ad" stroke-width="1.500"/><path d="M4 8l8-7" stroke="#2377ad"/><path d="M1 6v10M15 6v10M2 11.500h12" stroke="#111" stroke-width="1.400"/><path d="M1 11.500l4-2v4zM15 11.500l-4-2v4z"/></svg></button>
      <button><svg viewBox="0 0 16 16" class="tint"><circle cx="11" cy="5" r="3.500" fill="#bde0f4" stroke="#2377ad" stroke-width="1.500"/><path d="M8 9l7-8" stroke="#2377ad"/><path d="M0 7l4-4M8 15l5-4M3 5l7 8M2 8V4h4M7 13h4V9" stroke="#111" fill="none" stroke-width="1.400"/></svg></button>
      <button><svg viewBox="0 0 16 16" class="tint" fill="#fff" stroke="#222"><circle cx="12" cy="4" r="3.300" stroke-width="1.300"/><ellipse cx="5" cy="11" rx="4" ry="4.500" stroke-width="1.500"/><path d="M1 5l7 10M12 9l3 5M0 3l3 3M11 12l2 2" stroke-width="1.300"/></svg></button>
      <button><svg viewBox="0 0 16 16" class="tint" fill="#eee" stroke="#444"><circle cx="7" cy="9" r="5.500" stroke-width="1.400"/><path d="M1 3l10 11M9 8l6-6M12 2h3v3" fill="none" stroke-width="1.300"/></svg></button>
    </div>
  </section>

  <section class="command">
    <span class="cmdgrip"></span>
    <div class="cmdbox">
      <div class="history"><p><span>Autodesk DWG</span>。<span> </span>此文件上次由<span> Autodesk </span>应用程序或<span> Autodesk </span>许可的应用程序保存，是可靠的<span> DWG</span>。</p><p>命令:</p></div>
      <label class="prompt">命令:<input type="text" aria-label="命令行"></label>
    </div>
  </section>

  <footer class="status">
    <span class="st-h">燕秀字高=2.5</span><span class="st-c">1669.117, -173.770, 0.000</span>
    <div class="toggles">
      <button><svg viewBox="0 0 18 18" fill="none" stroke="#222"><path d="M0 7h13M7 0v13" stroke-width="1.300"/><path d="M5 5h4v4H5z"/><circle cx="11" cy="15" r="2" stroke="#2a5a9a"/><path d="M13 8h4v4h-4z" stroke="#c46a1a"/></svg></button>
      <button><svg viewBox="0 0 18 18" stroke="#222" stroke-width="1.500"><path d="M3 4h9M3 8h9M3 12h9" stroke-dasharray="1.500 1.500"/><path d="M14.500 3v12" stroke-dasharray="8 2"/></svg></button>
      <button><svg viewBox="0 0 18 18" fill="#fff" stroke="#333"><path d="M1.500 1.500h15v15h-15zM4.500 1v16M7.500 1v16M10.500 1v16M13.500 1v16M1 4.500h16M1 7.500h16M1 10.500h16M1 13.500h16"/></svg></button>
      <button><svg viewBox="0 0 18 18" fill="none" stroke="#444"><path d="M2.500 1v14.500H18" stroke-width="1.500"/><path d="M3 10h5v5"/></svg></button>
      <button><svg viewBox="0 0 18 18" fill="none" stroke="#222"><circle cx="8" cy="10" r="5"/><path d="M16 3L8 10h9M12 7v3" stroke-width="1.500"/></svg></button>
      <button class="on"><svg viewBox="0 0 18 18"><path d="M3 4h13v12H3z" fill="#f4f4f4" stroke="#333" stroke-width="1.300"/><circle cx="3" cy="3" r="2" fill="#fff" stroke="#d4691c"/></svg></button>
      <button><svg viewBox="0 0 18 18"><path d="M3 5l3-3h11v10l-4 4H3z" fill="url(#gGrey)" stroke="#444"/><circle cx="3" cy="14" r="2" fill="#fff" stroke="#d4691c"/></svg></button>
      <button class="on"><svg viewBox="0 0 18 18" fill="none" stroke="#111" stroke-width="1.300"><path d="M13 3L3 14h13"/><path d="M9 8l3 4"/></svg></button>
      <button class="on"><svg viewBox="0 0 18 18" fill="none" stroke="#222"><path d="M2.500 1v15H17M3 16l7-7M1 3l1.500-2L4 3M15 14l2 2-2 1"/><path d="M12 2l5 1-3 5-3 1 1-3-2-1z" fill="#f6ae3a" stroke="#a86a10"/></svg></button>
      <button class="on"><svg viewBox="0 0 18 18" fill="none" stroke="#111" stroke-width="1.500"><path d="M2 8h9M6.500 4v9M8 10h7v4H8z"/></svg></button>
      <button><svg viewBox="0 0 18 18" stroke="#111"><path d="M3 9h13" stroke-width="1.500"/><path d="M9.500 3v12" stroke-width="2.500"/></svg></button>
      <button class="on"><svg viewBox="0 0 18 18"><rect x="1" y="1" width="16" height="16" fill="#d4e8f6" stroke="#2460a8" stroke-width="1.500"/><path d="M3 4h12M3 8h12M3 12h12" stroke="#7aaad8" stroke-width="2" stroke-dasharray="2 2"/><path d="M5 6h10M5 10h10M5 14h10" stroke="#7aaad8" stroke-width="2" stroke-dasharray="2 2"/></svg></button>
      <button><svg viewBox="0 0 18 18"><path d="M5.500 3.500h8v12h-8z" fill="#fff" stroke="#111"/><path d="M7 6h5M7 9h5M7 12h5" stroke="#111" stroke-width="1.500" stroke-dasharray="2 1"/></svg></button>
      <button><svg viewBox="0 0 18 18" fill="none" stroke="#222"><path d="M0 4h8M4 0v8"/><path d="M6 6h7v7H6z" fill="#fff"/><path d="M10 10h7v7h-7z" fill="#7fbf63" stroke="#2a5a20"/></svg></button>
    </div>
    <div class="st-right">
      <button class="mdl">模型</button>
      <button><svg viewBox="0 0 18 18"><path d="M3 2h13v11H3z" fill="#eee" stroke="#333"/><path d="M6 4v7h5z" fill="none" stroke="#111"/><path d="M1 15.500h16" stroke="#333" stroke-width="1.500"/></svg></button>
      <button><svg viewBox="0 0 18 18"><path d="M1.500 3.500h7v7h-7zM9.500 3.500h7v7h-7z" fill="#eee" stroke="#333"/><path d="M2 14h14" stroke="#444" stroke-width="3"/></svg></button>
      <span class="g18"></span>
      <button class="scale"><svg><use href="#man"/></svg>1:1<span class="caret lg"></span></button>
      <button><svg viewBox="0 0 18 18"><use href="#man"/><circle cx="14" cy="10" r="3" fill="#ffd05a" stroke="#c8781c"/><path d="M12.500 13h3v3h-3z" fill="#e88a1c"/></svg></button>
      <button class="faded"><svg><use href="#man"/></svg></button>
      <span class="g6"></span>
      <button><svg viewBox="0 0 18 18" fill="none" stroke="#222"><circle cx="9" cy="9" r="7" stroke-width="2" stroke-dasharray="2.700 2.700"/><circle cx="9" cy="9" r="6" fill="#ddd"/><circle cx="9" cy="9" r="2.500" fill="#fff"/><path d="M17 12v5h-5z" fill="#111"/></svg></button>
      <button><svg viewBox="0 0 18 18"><path d="M1.500 8.500h10v7h-10z" fill="#eee" stroke="#222"/><path d="M9.500 8V5q0-3 3-3t3 3v2" fill="none" stroke="#222" stroke-width="1.600"/><path d="M6.500 10v4" stroke="#222"/></svg></button>
      <button><svg viewBox="0 0 18 18"><path d="M1 4h14v6H1z" fill="#6d8098" stroke="#3a4a5c"/><path d="M3 2v2M6 2v2M9 2v2M12 2v2M3 10v3M6 10v3" stroke="#333"/><circle cx="14" cy="11" r="3" fill="#cfe9fb" stroke="#3a8ac0"/><path d="M13 14h2v3h-2z" fill="#3a8ac0"/></svg></button>
      <span class="g6"></span>
      <span class="well"><svg viewBox="0 0 18 18"><path d="M1 2h7v7H1z" fill="#f0d040" stroke="#555"/><path d="M6 3q5-3 8 1v5H7z" fill="#3c78c0"/><path d="M2 9h10v6H2z" fill="#f0d040"/><path d="M7 12l3 4 7-8" fill="none" stroke="#2f9a1f" stroke-width="2.500"/></svg><svg viewBox="0 0 18 18"><path d="M7 12Q4 9 4 6.500T9 2t5 4.500-3 5.500v3H7z" fill="#fff0b0" stroke="#8a7430"/><path d="M7 16h4" stroke="#444" stroke-width="2"/></svg></span>
      <button class="nar" aria-label="状态栏菜单"><span class="caret"></span></button>
      <button><svg viewBox="0 0 18 18"><path d="M2.500 2.500h13v13h-13z" fill="#fff" stroke="#333"/><path d="M3 3h12v3H3z" fill="#555"/></svg></button>
      <span class="resize"></span>
    </div>
  </footer>
</main>

<div class="taskbar">
  <button class="orb" aria-label="开始"><svg viewBox="0 0 40 34"><circle cx="20" cy="18" r="17.500" fill="url(#gOrb)" stroke="#334b63"/><path d="M11 11q4-3 8-1l-1.500 7q-4-1.500-8 .5z" fill="#e8622c"/><path d="M20.500 11q4 2 9-1l-2 7.500q-4 2.500-8.500 0z" fill="#8cc63e"/><path d="M9 19.500q4-2 8 0l-1.500 7q-4-2-8 0z" fill="#3f9be0"/><path d="M18.500 20q4 2 8.500 0l-2 7.500q-4 2-8 0z" fill="#fbc52c"/></svg></button>
  <div class="quick">
    <button aria-label="迅雷"><svg><use href="#bird"/></svg></button>
    <button aria-label="头像"><svg viewBox="0 0 18 18"><circle cx="9" cy="9" r="7" fill="#e8a05c"/><path d="M2 7q7-9 14 0-7-4-14 0z" fill="#b5551c"/><circle cx="9" cy="10" r="5" fill="#fbe3c4"/><circle cx="7" cy="10" r="1"/><circle cx="11" cy="10" r="1"/></svg></button>
    <button aria-label="旺旺"><svg viewBox="0 0 18 18"><circle cx="9" cy="8" r="6.500" fill="#f8b81c"/><path d="M3 10q6 4 12-2l-2 7q-6 3-8 0z" fill="#d6421c"/><path d="M4 10q6 2 11-2v3q-5 3-10 1z" fill="#ffe27a"/><circle cx="8" cy="5" r="2.500" fill="#fde88a"/></svg></button>
    <button aria-label="查找"><svg viewBox="0 0 18 18"><path d="M6 4h9v12H6z" fill="#e8e0d0" stroke="#777"/><circle cx="7" cy="7" r="5" fill="#6fb0e0" stroke="#e8eef2" stroke-width="2"/><path d="M11 11l5 5" stroke="#c46a2a" stroke-width="3"/></svg></button>
  </div>
  <div class="tasks">
    <button class="t-qq"><svg><use href="#qq"/></svg>腾讯QQ</button>
    <span class="pair"><button><svg viewBox="0 0 18 18"><path d="M14 12q-2 4-6 4-5-1-5-7t6-6q6 0 6 7H5" fill="none" stroke="#49b4ef" stroke-width="3"/><path d="M1 15Q-1 8 9 3q8-3 8 1" fill="none" stroke="#f3c832" stroke-width="1.500"/></svg>提示信息 - ...</button><button><svg viewBox="0 0 18 18"><path d="M1 1h12v12H1z" fill="#f2f7f2" stroke="#888"/><path d="M3 7l3 3 5-6" fill="none" stroke="#37a02c" stroke-width="2"/><path d="M12 1h4v7h2l-4 4-4-4h2z" fill="#3d95de"/><path d="M5 13h12v4H5z" fill="#c8ccd0"/></svg>查看下载 - ...</button></span>
    <button class="t-win"><svg viewBox="0 0 18 18"><path d="M1 3h6l1 2h9v12H1z" fill="#f5da7a" stroke="#c0962c"/><path d="M4 17v-6q5-5 10 0v6h-3v-4q-2-2-4 0v4z" fill="#5cb6e6"/></svg>Windows...</button>
    <span class="pair cad"><button class="on"><svg><use href="#acad"/></svg>2T前桥布置...</button><button><svg><use href="#acad"/></svg>8.25-22.5.d...</button></span>
  </div>
  <div class="tray">
    <svg viewBox="0 0 18 18"><rect x="1" y="1" width="16" height="16" rx="2" fill="#e8552c" stroke="#fff" stroke-width=".6"/><path d="M13 5H6.500q-2 0-2 2t2 2h5q2 0 2 2t-2 2H5" fill="none" stroke="#fff" stroke-width="2.200"/></svg>
    <svg><use href="#qq"/></svg><svg><use href="#qq"/></svg>
    <svg viewBox="0 0 18 18"><path d="M1 4l4 2q3-5 7-4 4 1 5 5-1 6-7 6-5 0-6-4L1 7z" fill="#2aa84a"/><path d="M7 5q3-2 5 0" stroke="#9be8ae" fill="none"/><path d="M9 12v3M5 16h8" stroke="#999" stroke-width="2"/></svg>
    <svg><use href="#bird"/></svg>
    <svg viewBox="0 0 18 18"><path d="M2 1h5v4h1v8H1V5h1z" fill="#a8acb0"/><circle cx="12" cy="12" r="5.500" fill="#35ae35"/><path d="M9 12l2.500 3 4-5" fill="none" stroke="#fff" stroke-width="2"/></svg>
    <svg viewBox="0 0 18 18"><circle cx="9" cy="9" r="7.500" fill="#5f9fe0" stroke="#c8d8ea"/><path d="M13 5q-6-3-8 1 0 3 5 2V6l4 4-4 4v-2q-6 1-7-3" fill="#fff"/></svg>
    <svg viewBox="0 0 18 18"><path d="M1 9q1-7 8-7t8 7q-3-2-5 0-3-2-6 0-2-2-5 0z" fill="#22a53c"/><path d="M9 9v6q0 2 2 1" fill="none" stroke="#22a53c" stroke-width="1.500"/></svg>
    <svg viewBox="0 0 18 18"><path d="M2 1v16" stroke="#fff" stroke-width="2"/><path d="M3 2q5-1 7 1t6 0v7q-5 2-7 0t-6 0z" fill="#fff"/><circle cx="12" cy="13" r="5" fill="#dc2a20"/><path d="M10 11l4 4M14 11l-4 4" stroke="#fff" stroke-width="1.500"/></svg>
    <svg viewBox="0 0 18 18"><path d="M3 6h3l4-4v14l-4-4H3z" fill="#fff"/><path d="M12 6q2 3 0 6" fill="none" stroke="#fff"/></svg>
    <svg viewBox="0 0 18 18"><path d="M2 6h4l5-4v14l-5-4H2z" fill="#d8482c" stroke="#f2b8a4" stroke-width=".6"/></svg>
    <svg viewBox="0 0 18 18"><path d="M8 3H3v12h7" fill="none" stroke="#fff" stroke-width="1.500"/><path d="M7 7h9v3q-2 4-5 3v3M9 3v4M14 3v4" fill="#fff" stroke="#fff" stroke-width="1.500"/></svg>
    <svg viewBox="0 0 18 18"><path d="M6 5h11v8H6zM9 16h6M1 3h4M2 1v3M4 1v3M3 4v11h5" fill="none" stroke="#fff" stroke-width="1.500"/></svg>
  </div>
  <time>23:48</time>
  <button class="showdesk" aria-label="显示桌面"></button>
</div>
</body>
</html>
```
FILE: styles.css
```css
* { box-sizing: border-box; }
html, body { height: 100%; }
body {
  margin: 0; display: flex; flex-direction: column; overflow: hidden;
  background: linear-gradient(#3f5299 54px, #555 54px 55px, #dfe3e6 55px);
  font: 12px/16px "Noto Sans", "Noto Sans CJK SC", sans-serif; color: #333;
}
button, input, select { font: inherit; color: inherit; margin: 0; padding: 0; border: 0; background: none; border-radius: 0; }
button { display: flex; align-items: center; justify-content: center; white-space: nowrap; }
a { color: inherit; text-decoration: none; }
svg { display: block; flex: none; }
.defs { position: absolute; width: 0; height: 0; }
.i { width: 18px; height: 18px; }
.caret { display: block; flex: none; width: 0; height: 0; border: 3px solid transparent; border-top: 3px solid #444; border-bottom: 0; }
.caret.lg { border-width: 4px; border-top-width: 5px; border-bottom: 0; }
.caret.dim { border-top-color: #444; opacity: .8; }

.desktop-strip { height: 3px; background: linear-gradient(90deg, #32407c 0 635px, #e8efe0 635px 1148px, #3a4684 1148px); border-bottom: 1px solid #1c2644; }

/* window frame */
.window {
  position: relative; flex: 1; min-height: 0; display: flex; flex-direction: column;
  margin: 0 1px 0 3px; padding: 7px 7px 6px; border: 1px solid #2c3a5c; border-radius: 7px;
  background:
    linear-gradient(90deg, transparent 160px, #6a80c4 240px, #4659a0 400px, #5467ae 620px, #6176bb 800px, #5063a8 1100px, #46589c) top / 100% 34px no-repeat,
    linear-gradient(180deg, #8aa0cf, #c6dcee 60px, #e6f4fa 160px, #dff0f7 70%, #f1f9fc);
}
.titlebar { flex: none; display: flex; height: 22px; padding-left: 39px; align-items: stretch; }
.qat { display: flex; align-items: center; width: 393px; padding-left: 9px; background: linear-gradient(#666, #7c7c7c 60%, #5d5d5d); border-radius: 3px 0 0 0; }
.qat button { width: 24px; }
.qat > .caret { margin: 0 4px; }
.qat button svg { width: 17px; height: 17px; }
.workspace-pick { position: relative; flex: 1; height: 20px; margin-left: 0; background: linear-gradient(#e6e6e6, #c9c9c9); border: 1px solid #999; }
.workspace-pick svg { position: absolute; left: 2px; top: 0; }
.workspace-pick select { width: 100%; height: 18px; padding-left: 20px; appearance: none; color: #111; line-height: 18px; }
.workspace-pick::after { content: ""; position: absolute; right: 2px; top: 7px; border: 4px solid transparent; border-top: 4px solid #333; border-bottom: 0; }
.qat .qat-more { width: 14px; align-self: stretch; flex-direction: column; gap: 2px; background: linear-gradient(#aaa, #555); border: 1px solid #777; }
.qat-more .bar { width: 7px; height: 1px; background: #111; }
.qat-more .caret { border-top-color: #111; }
.caption { flex: 1; margin: 0; padding-left: 28px; display: flex; gap: 30px; font-size: 12px; font-weight: 400; color: #10142c; line-height: 14px;
  background: linear-gradient(transparent 13px, #c0cbf0aa 22px); white-space: nowrap; }
.infocenter { width: 412px; display: flex; align-items: center; background: linear-gradient(#666, #7f7f7f 60%, #6a6a6a); }
.expand { width: 14px; align-self: stretch; background: linear-gradient(#aaa, #555); }
.expand span { border: 4px solid transparent; border-left: 5px solid #000; border-right: 0; }
.infocenter input { width: 179px; height: 20px; padding: 0 4px; background: #f5f5f5; border: 1px solid #ccc; }
.infocenter input::placeholder { color: #666; font-style: italic; opacity: 1; }
.bino { margin-left: 4px; }
.signin { margin: 0 auto 0 6px; gap: 4px; color: #fff; }
.infocenter > .caret { margin: 0 10px 0 11px; }
.infocenter .sep { width: 1px; height: 18px; margin: 0 8px; background: #aaa; }
.help b { width: 16px; height: 16px; line-height: 15px; border-radius: 50%; background: #fff; color: #1d4da0; font-size: 13px; box-shadow: 0 0 0 1px #26529c; }
.infocenter > .help + .caret { margin: 0 5px 0 7px; }
.winbtns { display: flex; height: 18px; margin: -7px 0 0 20px; border: 1px solid #b8c6e6; border-top: 0; border-radius: 0 0 5px 5px; box-shadow: 0 0 0 1px #34447a; background: linear-gradient(#8b9ccc, #5d72b2 50%, #4c5fa2 50%, #7288c4); }
.winbtns button { width: 28px; border-right: 1px solid #b8c6e6; }
.winbtns button:last-child { width: 46px; border: 0; }
.winbtns svg { width: 14px; height: 12px; }

.menubar { flex: none; display: flex; height: 21px; padding-left: 45px; background: #404040; color: #eee; }
.menubar a { padding: 3px 10px 0; line-height: 18px; }
.menubar a.on { background: #f4f4f4; color: #333; }
.minribbon { margin-left: 22px; gap: 6px; }
.minribbon .caret { border-top-color: #eee; }
.appbtn { position: absolute; left: 8px; top: 7px; width: 40px; height: 39px; background: linear-gradient(#b0b0b0, #6c6c6c); border: 1px solid #555; border-radius: 4px 0 0 0; }
.appbtn svg { width: 38px; height: 38px; }
.watermark { position: absolute; left: 5px; top: 4px; display: flex; flex-direction: column; color: #161616; pointer-events: none;
  text-shadow: 1px 0 1px #ccc, -1px 0 1px #ccc, 0 1px 1px #ccc, 0 -1px 1px #ccc; }
.wm-cn { font: 700 15px/20px "Noto Sans CJK SC", sans-serif; }
.wm-url { font: 14px/24px "Liberation Mono", monospace; }

/* ribbon */
.ribbon { flex: none; display: flex; height: 98px; background: linear-gradient(90deg, #fff calc(100% - 10px), #8c8c8c calc(100% - 10px)); padding-left: 1px; }
.panel { display: flex; flex-direction: column; flex: none; border-right: 1px solid #a2a2a2; }
.body { height: 80px; padding-top: 5px; display: flex; align-items: flex-start; background: #fdfdfd; }
.body.col { flex-direction: column; }
.ptitle { position: relative; height: 17px; width: 100%; display: flex; align-items: center; justify-content: center; gap: 8px; background: #ededed; color: #333; }
.p-draw { width: 211px; } .p-mod { width: 227px; } .p-layer { width: 214px; } .p-anno { width: 118px; } .p-block { width: 98px; }
.p-prop { width: 162px; } .p-group { width: 68px; } .p-util { width: 75px; } .p-clip { width: 76px; border: 0; }
.launch { position: absolute; right: 4px; bottom: 4px; width: 7px; height: 7px; }
.big { flex-direction: column; justify-content: flex-start; width: 40px; line-height: 16px; }
.big.w42 { width: 42px; }
.big svg { width: 34px; height: 34px; margin-bottom: 5px; }
.big .caret { margin-top: 3px; }
.p-draw .body { padding-left: 2px; }
.p-draw .stack { margin-left: 3px; }
.stack { display: flex; flex-direction: column; gap: 2px; padding-top: 1px; }
.split, .rows .split { width: 36px; height: 22px; border: 1px solid #c6c8ca; background: linear-gradient(90deg, #f7f7f7 23px, #c6c8ca 23px 24px, #f7f7f7 24px); justify-content: flex-start; gap: 6px; padding-left: 3px; }
.split .caret { margin-left: 0; }
.split .i, .rows .split .i { width: 16px; height: 16px; margin-left: 1px; }
.sq { width: 24px; height: 22px; border: 1px solid #c6c8ca; background: linear-gradient(#fafafa, #efefef); }
.sq.on { background: #a9cdee; border-color: #2b5f98; }
.rows { padding-top: 1px; }
.rows button { height: 24px; gap: 5px; justify-content: flex-start; }
.rows .i { width: 17px; height: 17px; }
.p-mod .body { padding-left: 6px; }
.p-mod .rows { width: 59px; flex: none; }
.p-mod .rows:nth-child(3) { width: 72px; }
.caret.far { margin-left: 3px; }
.p-layer .body { padding-left: 2px; gap: 3px; }
.layerbtns { display: flex; gap: 4px; }
.grp { display: flex; border: 1px solid #c6c8ca; height: 22px; background: linear-gradient(#fafafa, #f0f0f0); }
.grp button { width: 22px; }
.grp button + button { width: 24px; border-left: 1px solid #c6c8ca; }
.pick { position: relative; height: 22px; border: 1px solid #c6c8ca; background: linear-gradient(#fafafa, #f0f0f0); }
.pick select { width: 100%; height: 20px; line-height: 20px; padding-left: 2px; appearance: none; }
.pick::after { content: ""; position: absolute; right: 4px; top: 8px; border: 4px solid transparent; border-top: 5px solid #333; border-bottom: 0; }
.pick.wide { width: 208px; }
.deco { position: absolute; left: 2px; top: 0; height: 20px; display: flex; align-items: center; gap: 1px; pointer-events: none; }
.swatch { width: 14px; height: 14px; margin-left: 4px; background: #f40000; border: 1px solid #222; }
.big-sw { width: 16px; height: 16px; margin-left: 0; }
.pick.lay select { padding-left: 81px; }
.p-anno .body { padding-left: 4px; } .p-anno .rows { margin-left: 8px; }
.p-block .body { padding-left: 1px; } .p-block .rows { margin-left: 4px; }
.p-block .rows .split { margin-left: -4px; }
.p-prop .body { gap: 2px; padding-left: 3px; }
.prow { display: flex; align-items: center; gap: 1px; }
.prow .pick { width: 137px; height: 22px; }
.pick.clr select { padding-left: 20px; }
.pick.ln select { padding-left: 69px; }
.rule { width: 64px; height: 1px; background: #111; }
.rule.short { width: 58px; margin-left: 6px; }
.p-group .stack { margin-left: 1px; }
.p-util .body { padding-left: 4px; } .p-util .stack { margin-left: 5px; }
.p-clip .body { padding-left: 5px; } .p-clip .stack { margin-left: 4px; }

/* drawing area */
.workspace { flex: 1; min-height: 0; display: flex; align-items: flex-start; gap: 4px; padding: 7px 2px 5px 1px; background: #686868; }
.doc { flex: 1; align-self: stretch; min-width: 0; display: flex; flex-direction: column; border-top: 1px solid #aaa; background: #eee; }
.docmain { flex: 1; min-height: 0; display: flex; }
.canvas { position: relative; flex: 1; background: #212830; overflow: hidden; }
.drawing { width: 100%; height: 100%; }
.ln { fill: none; shape-rendering: crispEdges; }
.white { stroke: #fff; } .red { stroke: #d41616; } .cyan { stroke: #31d5e0; }
.axis { font: 300 20px "Open Sans", sans-serif; fill: #fff; }
.viewlabel { position: absolute; left: 5px; top: 5px; display: flex; gap: 3px; color: #eee; }
.mdi { position: absolute; right: 9px; top: 8px; display: flex; gap: 8px; }
.mdi svg { width: 12px; height: 12px; }
.cube { position: absolute; right: 11px; top: 32px; width: 96px; height: 100px; }
.cube text { font: 13px "Noto Sans CJK SC", sans-serif; fill: #a4a6a8; text-anchor: middle; }
.cube .face { font-size: 22px; fill: #4c5258; }
.wcs { position: absolute; right: 35px; top: 143px; width: 48px; height: 18px; gap: 6px; background: #9598a1; border: 1px solid #a3a7b0; border-radius: 4px; color: #5a5e68; font: 11px "Liberation Sans", sans-serif; }
.navbar { position: absolute; right: 2px; top: 185px; width: 33px; height: 214px; display: flex; flex-direction: column; align-items: center; background: #596068; border: 1px solid #646a72; border-radius: 4px; }
.navbar svg { width: 24px; height: 24px; fill: none; stroke: #3c424a; stroke-width: 1.2; }
.navbar .x { align-self: flex-end; margin: 0 1px 7px; }
.navbar .x:last-child { margin: auto 1px 1px; }
.navbar .x svg { width: 10px; height: 10px; }
.navbar .caret { margin: 5px 0 8px; border-top-color: #3c424a; }
.navbar button + button { margin-top: 4px; }

.vscroll { width: 19px; display: flex; flex-direction: column; align-items: center; background: #efefef; border-right: 2px solid #fff; }
.vscroll button { width: 17px; height: 17px; }
.vscroll .thumb { width: 15px; height: 15px; margin: 122px 0 auto; }
.thumb { background: linear-gradient(#fafafa, #cfcfcf); border: 1px solid #8a8a8a; border-radius: 2px; }
.up, .down, .left, .right { border: 4px solid transparent; }
.up { border-top: 0; border-bottom-color: #333; } .down { border-bottom: 0; border-top-color: #333; }
.left { border-left: 0; border-right-color: #333; } .right { border-right: 0; border-left-color: #333; }
.tabs { flex: none; height: 16px; display: flex; background: #f1f1f1; }
.arrows { display: flex; padding-left: 1px; }
.arrows button { width: 14px; border-right: 1px solid #aaa; }
.arrows svg { width: 13px; height: 14px; fill: #555; }
.tab { height: 15px; line-height: 15px; }
.tab.model { width: 46px; background: #212830; color: #fff; clip-path: polygon(0 0, 100% 0, 88% 100%, 8% 100%); }
.tab.layout { width: 50px; padding-right: 10px; color: #111; background: linear-gradient(110deg, #fff 44px, #444 44px 45px, #f1f1f1 45px); }
.hscroll { flex: 1; display: flex; align-items: center; justify-content: flex-end; padding-right: 19px; }
.hscroll .grip { width: 5px; height: 13px; border: 1px solid #999; border-right: 0; margin-right: 2px; }
.hscroll button { width: 16px; height: 13px; background: #e4e4e4; border: 1px solid #aaa; }
.hscroll .thumb { width: 15px; height: 13px; }
.hscroll .track { width: 268px; } .hscroll .track2 { width: 90px; }

.sidebar { flex: none; width: 26px; margin-top: -1px; padding-bottom: 1px; display: flex; flex-direction: column; align-items: center; background: #ececec; border: 2px solid #4c4c4c; }
.sidebar .dots { width: 22px; height: 7px; background: repeating-linear-gradient(90deg, #999 0 1px, #555 1px 2px); }
.sidebar button { height: 22px; }
.sidebar svg { width: 16px; height: 16px; overflow: visible; }
.sidebar .tint { background: #d8d4d0; }
.t-red { font: 14px "Liberation Serif", serif; fill: #e01818; } .t-blue { font: 13px "Liberation Serif", serif; fill: #2433b8; }
.t-mag { font: 11px "Liberation Sans", sans-serif; fill: #e020b0; } .t-num { font: 700 8px "Liberation Sans", sans-serif; fill: #111; }
.t-grn { font: 700 9px "Liberation Sans", sans-serif; fill: #108a18; } .t-r2 { font: 700 7px "Liberation Sans", sans-serif; fill: #d02020; }

/* command line */
.command { flex: none; display: flex; height: 59px; background: #9c9c9c; border-bottom: 1px solid #111; color: #111; }
.cmdgrip { width: 12px; height: 5px; margin: 3px 3px 0 1px; background: repeating-linear-gradient(#9c9c9c00 0 1px, #9c9c9c 1px 2px), repeating-linear-gradient(90deg, #333 0 1px, #9c9c9c 1px 2px); }
.cmdbox { flex: 1; border-left: 1px solid #eee; display: flex; flex-direction: column; }
.history { flex: 1; background: #c8c8c8; border-bottom: 1px solid #888; font: 14px/15px "Noto Sans CJK SC", sans-serif; }
.history p { margin: 0; white-space: pre; }
.history span { font: 12px/15px "DejaVu Sans Mono", monospace; }
.prompt { display: flex; height: 17px; background: #a5d5db; font: 14px/18px "Noto Sans CJK SC", sans-serif; }
.prompt input { flex: 1; outline: 0; padding-left: 4px; }

/* status bar */
.status { flex: none; height: 22px; display: flex; align-items: stretch; background: linear-gradient(#8d8d8d, #7b7b7b); color: #111; }
.status > span { line-height: 22px; white-space: nowrap; }
.st-h { width: 84px; padding-left: 6px; margin-right: 7px; }
.st-c { width: 180px; font: 10px "DejaVu Sans Mono", monospace; }
.toggles, .st-right { display: flex; border-left: 1px solid #555; }
.status button { width: 22px; background: linear-gradient(#b9b9b9, #9c9c9c); border-right: 1px solid #5a5a5a; }
.status button.on { background: linear-gradient(#d9eff6, #a4d3e4); }
.status svg { width: 18px; height: 18px; }
.st-right { margin-left: auto; }
.status .mdl { width: 31px; }
.status .scale { width: 54px; gap: 2px; border-left: 1px solid #5a5a5a; font: 11px "DejaVu Sans Mono", monospace; }
.status .caret { border-top-color: #111; }
.faded svg { opacity: .35; }
.g18 { width: 18px; } .g6 { width: 6px; border-right: 1px solid #5a5a5a; }
.well { display: flex; align-items: center; gap: 4px; width: 44px; height: 18px; margin: 2px 6px 0 0; padding-left: 2px; border: 1px solid #555; background: #a2a2a2; }
.status .nar { width: 11px; border-left: 1px solid #5a5a5a; }
.resize { align-self: flex-end; width: 12px; height: 12px; margin: 0 2px; background: radial-gradient(circle at 2px 2px, #ddd 0 1px, transparent 2px) 0 0 / 4px 4px; clip-path: polygon(100% 0, 100% 100%, 0 100%); }

/* taskbar */
.taskbar { position: relative; flex: none; height: 30px; display: flex; align-items: center; background: linear-gradient(#4a5563 0, #141b25 3px, #10161f); color: #f2f2f2; }
.taskbar svg { width: 18px; height: 18px; }
.orb { width: 54px; align-self: flex-end; }
.taskbar .orb svg { width: 44px; height: 37px; margin-top: -7px; }
.quick { display: flex; gap: 24px; padding-left: 16px; width: 175px; }
.tasks { display: flex; align-self: stretch; padding: 1px 0; }
.tasks button { height: 28px; justify-content: flex-start; gap: 3px; padding-left: 5px; border: 1px solid #7f8791; border-radius: 2px; background: linear-gradient(#5c646f, #343c47 50%, #1c242e); overflow: hidden; }
.tasks .on { background: linear-gradient(#a0a6ad, #6d747d 50%, #646b74); }
.t-qq { width: 102px; }
.pair { display: flex; margin: 0 4px 0 9px; }
.pair button { width: 109px; }
.t-win { width: 98px; }
.pair.cad { margin-left: 12px; }
.tray { display: flex; align-items: center; gap: 6px; margin-left: auto; }
time { margin: 0 14px 0 17px; width: 31px; }
.showdesk { width: 13px; align-self: stretch; border: 1px solid #6d757e; background: linear-gradient(90deg, #454d57, #1f262f); }
```
